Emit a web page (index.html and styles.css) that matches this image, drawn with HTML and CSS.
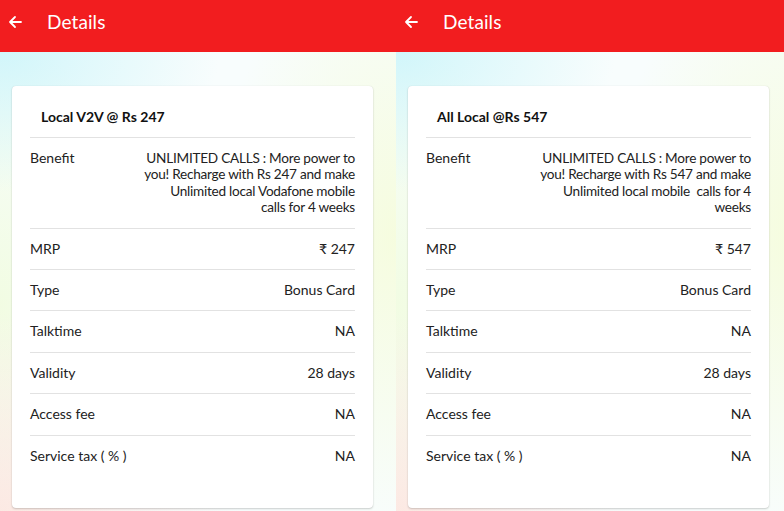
FILE: index.html
```html
<!DOCTYPE html>
<html>
<head>
<meta charset="utf-8">
<link rel="stylesheet" href="styles.css">
</head>
<body>
<div class="screens">
  <section class="screen">
    <header class="appbar">
      <svg class="back" width="14" height="14" viewBox="0 0 14 14"><path d="M13 7H2M7 2L2 7l5 5" fill="none" stroke="#fff" stroke-width="1.8" stroke-linecap="round" stroke-linejoin="round"/></svg>
      <span class="title">Details</span>
    </header>
    <div class="body">
      <div class="card">
        <h2 class="card-title">Local V2V @ Rs 247</h2>
        <div class="rows">
          <div class="row"><span class="label">Benefit</span><span class="value long">UNLIMITED CALLS : More power to<br>you! Recharge with Rs 247 and make<br>Unlimited local Vodafone mobile<br>calls for 4 weeks</span></div>
          <div class="row"><span class="label">MRP</span><span class="value">₹ 247</span></div>
          <div class="row"><span class="label">Type</span><span class="value">Bonus Card</span></div>
          <div class="row"><span class="label">Talktime</span><span class="value">NA</span></div>
          <div class="row"><span class="label">Validity</span><span class="value">28 days</span></div>
          <div class="row"><span class="label">Access fee</span><span class="value">NA</span></div>
          <div class="row"><span class="label">Service tax ( % )</span><span class="value">NA</span></div>
        </div>
      </div>
    </div>
  </section>
  <section class="screen">
    <header class="appbar">
      <svg class="back" width="14" height="14" viewBox="0 0 14 14"><path d="M13 7H2M7 2L2 7l5 5" fill="none" stroke="#fff" stroke-width="1.8" stroke-linecap="round" stroke-linejoin="round"/></svg>
      <span class="title">Details</span>
    </header>
    <div class="body">
      <div class="card">
        <h2 class="card-title">All Local @Rs 547</h2>
        <div class="rows">
          <div class="row"><span class="label">Benefit</span><span class="value long">UNLIMITED CALLS : More power to<br>you! Recharge with Rs 547 and make<br>Unlimited local mobile&nbsp; calls for 4<br>weeks</span></div>
          <div class="row"><span class="label">MRP</span><span class="value">₹ 547</span></div>
          <div class="row"><span class="label">Type</span><span class="value">Bonus Card</span></div>
          <div class="row"><span class="label">Talktime</span><span class="value">NA</span></div>
          <div class="row"><span class="label">Validity</span><span class="value">28 days</span></div>
          <div class="row"><span class="label">Access fee</span><span class="value">NA</span></div>
          <div class="row"><span class="label">Service tax ( % )</span><span class="value">NA</span></div>
        </div>
      </div>
    </div>
  </section>
</div>
</body>
</html>
```
FILE: styles.css
```css
* { box-sizing: border-box; }
html, body { margin: 0; padding: 0; }
body {
  width: 784px;
  height: 511px;
  overflow: hidden;
  background: #fff;
  font-family: Lato, "Noto Sans", sans-serif;
  color: #222;
}
.screens {
  display: flex;
  width: 784px;
  height: 511px;
  overflow: hidden;
}
.screen {
  flex: 0 0 396px;
  display: flex;
  flex-direction: column;
  height: 511px;
}
.appbar {
  height: 52px;
  flex: 0 0 52px;
  background: #f21d1f;
  display: flex;
  align-items: center;
  padding-left: 8px;
  padding-bottom: 8px;
}
.back { display: block; margin-top: 0; }
.title {
  color: #fff;
  font-size: 19px;
  margin-left: 25px;
  margin-top: -1px;
  letter-spacing: 0.1px;
}
.body {
  flex: 1;
  padding: 34px 0 0 12px;
  background:
    radial-gradient(ellipse 220px 140px at 0% 0%, rgba(205,245,250,0.9), rgba(205,245,250,0) 100%),
    radial-gradient(ellipse 180px 300px at 100% 40%, rgba(245,252,215,0.8), rgba(245,252,215,0) 100%),
    radial-gradient(ellipse 240px 200px at 0% 100%, rgba(253,228,222,0.8), rgba(253,228,222,0) 100%),
    radial-gradient(ellipse 160px 260px at 0% 55%, rgba(240,252,220,0.8), rgba(240,252,220,0) 100%),
    #f8fdfd;
}
.card {
  width: 361px;
  height: 422px;
  background: #fff;
  border-radius: 4px;
  box-shadow: 0 1px 2px rgba(0,0,0,0.18), 0 0 1px rgba(0,0,0,0.12);
  padding: 0 18px;
}
.card-title {
  margin: 0;
  padding: 23px 0 12px 11px;
  font-size: 14px;
  line-height: 16px;
  font-weight: 700;
  color: #111;
  border-bottom: 1px solid #e2e2e2;
}
.row {
  display: flex;
  justify-content: space-between;
  align-items: flex-start;
  padding: 12px 0;
  font-size: 14px;
  line-height: 16.4px;
  border-bottom: 1px solid #e2e2e2;
}
.row:last-child { border-bottom: none; }
.label { white-space: nowrap; color: #222; }
.value { text-align: right; color: #222; white-space: nowrap; }
.value.long { font-size: 13.6px; letter-spacing: -0.25px; }
```
